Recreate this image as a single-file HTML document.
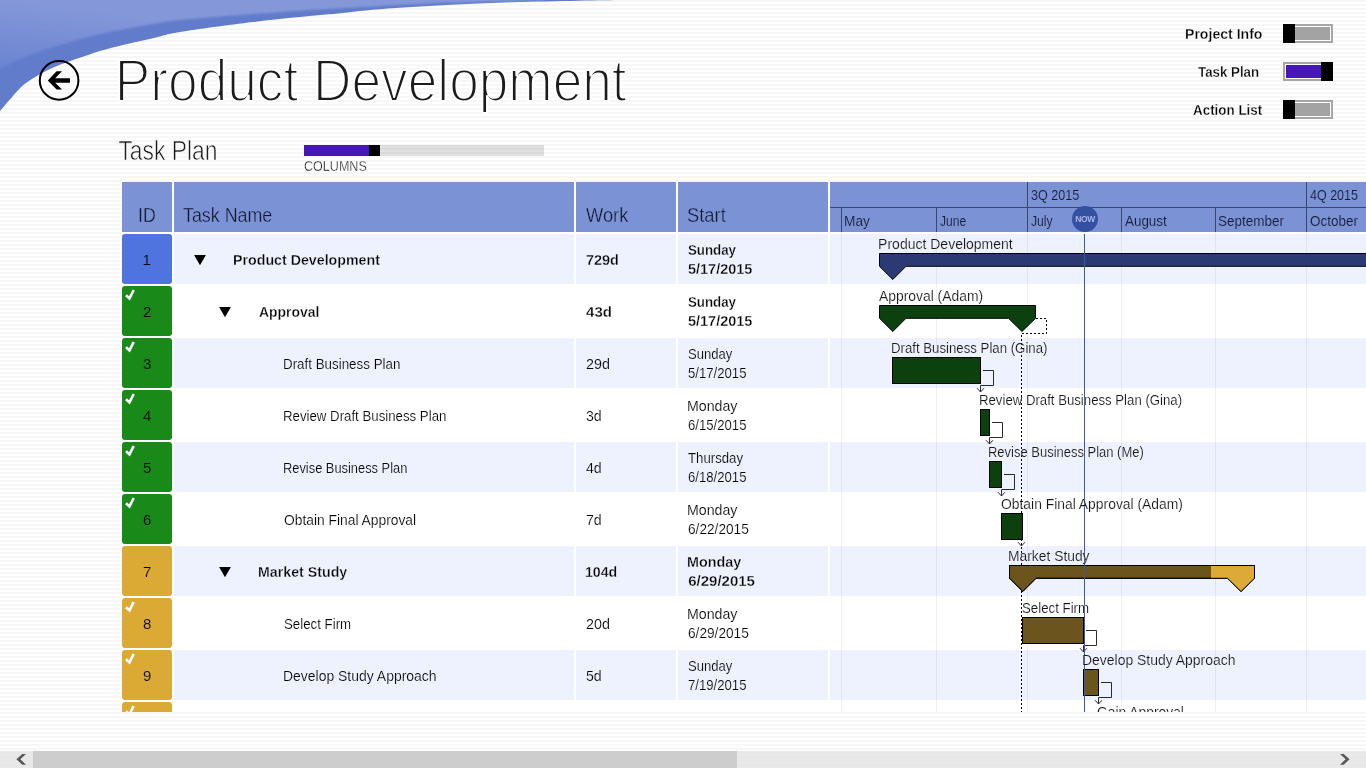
<!DOCTYPE html>
<html lang="en"><head><meta charset="utf-8"><title>Product Development - Task Plan</title>
<style>
html,body{margin:0;padding:0}
body{width:1366px;height:768px;overflow:hidden;position:relative;font-family:"Liberation Sans",sans-serif;
 background:#fff repeating-linear-gradient(to bottom,#f7f7f7 0,#f7f7f7 2px,#fff 2px,#fff 4px);}
.abs{position:absolute}
.t{position:absolute;white-space:nowrap;line-height:1;transform-origin:0 0;display:block}
#grid{position:absolute;left:0;top:0;width:1366px;height:712px;overflow:hidden}
.hd{position:absolute;top:182px;height:50px;background:#7b92d5}
.rb{position:absolute;height:50px;background:#eef2fe}
.idc{position:absolute;left:122px;width:50px;height:50px;border-radius:3px}
.idb{background:#4f74e0}.idg{background:#198a19}.idy{background:#dbaa35}
.vl{position:absolute;width:1px;top:232px;height:480px;background:rgba(110,90,220,0.10)}
.bar{position:absolute;box-sizing:border-box;border:1px solid #000;height:27px}
.tg{position:absolute;left:1283px;width:50px;height:19px;box-sizing:border-box;border:2px solid #a6a6a6;background:#fff}
.tg i{position:absolute;left:1px;top:1px;right:1px;bottom:1px;background:#a3a3a3}
.tg b{position:absolute;top:-2px;width:12px;height:19px;background:#000}
#all{position:absolute;left:0;top:0;width:1366px;height:768px;will-change:transform}
</style></head><body><div id="all">
<svg class="abs" style="left:0;top:0" width="640" height="120" viewBox="0 0 640 120">
<defs><linearGradient id="lg" gradientUnits="userSpaceOnUse" x1="8" y1="0" x2="0" y2="70"><stop offset="0" stop-color="#8498d9"/><stop offset="1" stop-color="#6a84d1"/></linearGradient>
<clipPath id="swc"><path d="M0,111 C1.9,108.7 7.8,101.7 11.7,97.4 C15.6,93.1 19.5,88.5 23.4,85.1 C27.3,81.7 31.3,79.4 35.2,76.9 C39.1,74.5 43.0,72.4 46.9,70.4 C50.8,68.5 54.7,66.8 58.6,65.2 C62.5,63.6 66.4,62.4 70.3,61 C74.2,59.6 77.0,58.7 82,57 C87.0,55.3 92.8,53.1 100,51 C107.2,48.9 115.7,46.8 125,44.5 C134.3,42.2 146.8,39.6 156,37.5 C165.2,35.4 163.8,34.6 180,32 C196.2,29.4 228.7,24.9 253,22 C277.3,19.1 304.8,16.7 326,14.6 C347.2,12.5 360.0,10.8 380,9.2 C400.0,7.6 424.0,6.2 446,5 C468.0,3.8 490.0,2.9 512,2.2 C534.0,1.5 559.7,1.1 578,0.7 C596.3,0.3 614.7,0.1 622,0 L0,0 Z"/></clipPath>
<filter id="swb" x="-5%" y="-20%" width="110%" height="140%"><feGaussianBlur stdDeviation="0.8"/></filter></defs>
<path d="M0,111 C1.9,108.7 7.8,101.7 11.7,97.4 C15.6,93.1 19.5,88.5 23.4,85.1 C27.3,81.7 31.3,79.4 35.2,76.9 C39.1,74.5 43.0,72.4 46.9,70.4 C50.8,68.5 54.7,66.8 58.6,65.2 C62.5,63.6 66.4,62.4 70.3,61 C74.2,59.6 77.0,58.7 82,57 C87.0,55.3 92.8,53.1 100,51 C107.2,48.9 115.7,46.8 125,44.5 C134.3,42.2 146.8,39.6 156,37.5 C165.2,35.4 163.8,34.6 180,32 C196.2,29.4 228.7,24.9 253,22 C277.3,19.1 304.8,16.7 326,14.6 C347.2,12.5 360.0,10.8 380,9.2 C400.0,7.6 424.0,6.2 446,5 C468.0,3.8 490.0,2.9 512,2.2 C534.0,1.5 559.7,1.1 578,0.7 C596.3,0.3 614.7,0.1 622,0 L0,0 Z" fill="#627ccc"/>
<g clip-path="url(#swc)"><path d="M0,69.3 C1.9,68.2 7.8,64.8 11.7,62.8 C15.6,60.8 19.5,59.1 23.4,57.5 C27.3,55.9 31.3,54.4 35.2,52.9 C39.1,51.4 43.0,50.1 46.9,48.8 C50.8,47.5 54.7,46.4 58.6,45.2 C62.5,44.0 66.4,42.8 70.3,41.7 C74.2,40.6 77.0,40.1 82,38.8 C87.0,37.5 92.8,35.7 100,34.1 C107.2,32.5 115.7,30.8 125,29 C134.3,27.2 146.8,24.9 156,23.4 C165.2,21.9 163.8,21.6 180,20 C196.2,18.4 228.7,15.8 253,14 C277.3,12.2 304.8,10.3 326,9 C347.2,7.7 360.0,7.1 380,6 C400.0,4.9 424.0,3.5 446,2.6 C468.0,1.8 495.5,1.3 512,0.9 C528.5,0.5 539.5,0.1 545,0 L545,-30 L-30,-30 L-30,69.3 Z" fill="url(#lg)" filter="url(#swb)"/></g>
</svg>
<svg class="abs" style="left:36px;top:57px" width="46" height="46" viewBox="36 57 46 46">
<circle cx="59.1" cy="80.4" r="19.3" fill="none" stroke="#000" stroke-width="2"/>
<polygon points="47.8,80.4 56.6,71.2 62,71.2 55.2,78.2 70,78.2 70,82.7 55.2,82.7 62,89.6 56.6,89.6" fill="#000"/>
</svg>
<div class="abs" style="left:304px;top:145px;width:240px;height:11px;background:rgba(0,0,0,0.12)"></div>
<div class="abs" style="left:304px;top:145px;width:65px;height:11px;background:#4617b4"></div>
<div class="abs" style="left:369px;top:145px;width:11px;height:11px;background:#000"></div>
<div class="tg" style="top:24px"><i></i><b style="left:-2px"></b></div>
<div class="tg" style="top:62px"><i style="background:#4617b4"></i><b style="left:36px"></b></div>
<div class="tg" style="top:100px"><i></i><b style="left:-2px"></b></div>
<div id="grid">
<div class="abs" style="left:121px;top:182px;width:1245px;height:530px;background:#fff"></div>
<div class="hd" style="left:122px;width:50px"></div>
<div class="hd" style="left:174px;width:400px"></div>
<div class="hd" style="left:576px;width:100px"></div>
<div class="hd" style="left:678px;width:150px"></div>
<div class="hd" style="left:830px;width:536px"></div>
<div class="rb" style="left:174px;top:234px;width:400px"></div>
<div class="rb" style="left:576px;top:234px;width:100px"></div>
<div class="rb" style="left:678px;top:234px;width:150px"></div>
<div class="rb" style="left:830px;top:234px;width:536px"></div>
<div class="idc idb" style="top:234px"></div>
<svg class="abs" style="left:192.6px;top:254px" width="14" height="12" viewBox="0 0 14 12"><polygon points="1.1,1 12.9,1 7,11.2" fill="#000"/></svg>
<div class="idc idg" style="top:286px"></div>
<svg class="abs" style="left:124px;top:288px" width="13" height="14" viewBox="0 0 13 14"><path d="M2.0,7.2 L5.5,10.4 L9.7,2.0" fill="none" stroke="#fff" stroke-width="2.6"/></svg>
<svg class="abs" style="left:217.6px;top:306px" width="14" height="12" viewBox="0 0 14 12"><polygon points="1.1,1 12.9,1 7,11.2" fill="#000"/></svg>
<div class="rb" style="left:174px;top:338px;width:400px"></div>
<div class="rb" style="left:576px;top:338px;width:100px"></div>
<div class="rb" style="left:678px;top:338px;width:150px"></div>
<div class="rb" style="left:830px;top:338px;width:536px"></div>
<div class="idc idg" style="top:338px"></div>
<svg class="abs" style="left:124px;top:340px" width="13" height="14" viewBox="0 0 13 14"><path d="M2.0,7.2 L5.5,10.4 L9.7,2.0" fill="none" stroke="#fff" stroke-width="2.6"/></svg>
<div class="idc idg" style="top:390px"></div>
<svg class="abs" style="left:124px;top:392px" width="13" height="14" viewBox="0 0 13 14"><path d="M2.0,7.2 L5.5,10.4 L9.7,2.0" fill="none" stroke="#fff" stroke-width="2.6"/></svg>
<div class="rb" style="left:174px;top:442px;width:400px"></div>
<div class="rb" style="left:576px;top:442px;width:100px"></div>
<div class="rb" style="left:678px;top:442px;width:150px"></div>
<div class="rb" style="left:830px;top:442px;width:536px"></div>
<div class="idc idg" style="top:442px"></div>
<svg class="abs" style="left:124px;top:444px" width="13" height="14" viewBox="0 0 13 14"><path d="M2.0,7.2 L5.5,10.4 L9.7,2.0" fill="none" stroke="#fff" stroke-width="2.6"/></svg>
<div class="idc idg" style="top:494px"></div>
<svg class="abs" style="left:124px;top:496px" width="13" height="14" viewBox="0 0 13 14"><path d="M2.0,7.2 L5.5,10.4 L9.7,2.0" fill="none" stroke="#fff" stroke-width="2.6"/></svg>
<div class="rb" style="left:174px;top:546px;width:400px"></div>
<div class="rb" style="left:576px;top:546px;width:100px"></div>
<div class="rb" style="left:678px;top:546px;width:150px"></div>
<div class="rb" style="left:830px;top:546px;width:536px"></div>
<div class="idc idy" style="top:546px"></div>
<svg class="abs" style="left:217.6px;top:566px" width="14" height="12" viewBox="0 0 14 12"><polygon points="1.1,1 12.9,1 7,11.2" fill="#000"/></svg>
<div class="idc idy" style="top:598px"></div>
<svg class="abs" style="left:124px;top:600px" width="13" height="14" viewBox="0 0 13 14"><path d="M2.0,7.2 L5.5,10.4 L9.7,2.0" fill="none" stroke="#fff" stroke-width="2.6"/></svg>
<div class="rb" style="left:174px;top:650px;width:400px"></div>
<div class="rb" style="left:576px;top:650px;width:100px"></div>
<div class="rb" style="left:678px;top:650px;width:150px"></div>
<div class="rb" style="left:830px;top:650px;width:536px"></div>
<div class="idc idy" style="top:650px"></div>
<svg class="abs" style="left:124px;top:652px" width="13" height="14" viewBox="0 0 13 14"><path d="M2.0,7.2 L5.5,10.4 L9.7,2.0" fill="none" stroke="#fff" stroke-width="2.6"/></svg>
<div class="idc idy" style="top:702px"></div>
<svg class="abs" style="left:124px;top:704px" width="13" height="14" viewBox="0 0 13 14"><path d="M2.0,7.2 L5.5,10.4 L9.7,2.0" fill="none" stroke="#fff" stroke-width="2.6"/></svg>
<div class="vl" style="left:841px"></div>
<div class="vl" style="left:936px"></div>
<div class="vl" style="left:1027px"></div>
<div class="vl" style="left:1121px"></div>
<div class="vl" style="left:1215px"></div>
<div class="vl" style="left:1306px"></div>
<div class="abs" style="left:830px;top:207px;width:536px;height:1px;background:#3b4670"></div>
<div class="abs" style="left:841px;top:207px;width:1px;height:25px;background:#3b4670"></div>
<div class="abs" style="left:936px;top:207px;width:1px;height:25px;background:#3b4670"></div>
<div class="abs" style="left:1121px;top:207px;width:1px;height:25px;background:#3b4670"></div>
<div class="abs" style="left:1215px;top:207px;width:1px;height:25px;background:#3b4670"></div>
<div class="abs" style="left:1027px;top:182px;width:1px;height:50px;background:#3b4670"></div>
<div class="abs" style="left:1306px;top:182px;width:1px;height:50px;background:#3b4670"></div>
<svg class="abs" style="left:0;top:0" width="1366" height="712" viewBox="0 0 1366 712"><path d="M1036,318.5 H1046.5 V333.5 H1021.5 V712" fill="none" stroke="#000" stroke-width="1" stroke-dasharray="2,2"/>
<polygon points="879.5,253.5 1400.0,253.5 1400.0,266.3 906.0,266.3 892.8,279.5 879.5,266.3" fill="#2b3a72" stroke="#000" stroke-width="1"/>
<polygon points="879.5,305.5 1035.5,305.5 1035.5,318.3 1022.0,331.5 1008.5,318.3 906.0,318.3 892.8,331.5 879.5,318.3" fill="#0c400e" stroke="#000" stroke-width="1"/>
<rect x="892.5" y="357.5" width="88.0" height="26" fill="#0c400e" stroke="#000" stroke-width="1"/>
<path d="M983.0,370.5 H993.5 V385.5 H980.5 V392 M977.0,388.2 L980.5,392 L984.0,388.2" fill="none" stroke="#2b2b2b" stroke-width="1"/>
<rect x="980.5" y="409.5" width="9.0" height="26" fill="#0c400e" stroke="#000" stroke-width="1"/>
<path d="M992.0,422.5 H1002.5 V437.5 H989.5 V444 M986.0,440.2 L989.5,444 L993.0,440.2" fill="none" stroke="#2b2b2b" stroke-width="1"/>
<rect x="989.5" y="461.5" width="12.0" height="26" fill="#0c400e" stroke="#000" stroke-width="1"/>
<path d="M1004.0,474.5 H1014.5 V489.5 H1001.5 V496 M998.0,492.2 L1001.5,496 L1005.0,492.2" fill="none" stroke="#2b2b2b" stroke-width="1"/>
<rect x="1001.5" y="513.5" width="21.0" height="26" fill="#0c400e" stroke="#000" stroke-width="1"/>
<clipPath id="c546"><rect x="1211" y="546" width="400" height="52"/></clipPath>
<polygon points="1009.5,565.5 1254.5,565.5 1254.5,578.3 1241.0,591.5 1227.5,578.3 1036.0,578.3 1022.8,591.5 1009.5,578.3" fill="#6b551c" stroke="#000" stroke-width="1"/>
<polygon points="1009.5,565.5 1254.5,565.5 1254.5,578.3 1241.0,591.5 1227.5,578.3 1036.0,578.3 1022.8,591.5 1009.5,578.3" fill="#dcaa37" clip-path="url(#c546)"/>
<polygon points="1009.5,565.5 1254.5,565.5 1254.5,578.3 1241.0,591.5 1227.5,578.3 1036.0,578.3 1022.8,591.5 1009.5,578.3" fill="none" stroke="#000" stroke-width="1"/>
<rect x="1022.5" y="617.5" width="61.0" height="26" fill="#6b551c" stroke="#000" stroke-width="1"/>
<path d="M1086.0,630.5 H1096.5 V645.5 H1083.5 V652 M1080.0,648.2 L1083.5,652 L1087.0,648.2" fill="none" stroke="#2b2b2b" stroke-width="1"/>
<rect x="1083.5" y="669.5" width="15.0" height="26" fill="#6b551c" stroke="#000" stroke-width="1"/>
<path d="M1101.0,682.5 H1111.5 V697.5 H1098.5 V704 M1095.0,700.2 L1098.5,704 L1102.0,700.2" fill="none" stroke="#2b2b2b" stroke-width="1"/>
<path d="M1018,542.2 L1021.5,546 L1025,542.2" fill="none" stroke="#2b2b2b" stroke-width="1"/>
<rect x="1084" y="234" width="1" height="478" fill="#3f57a8"/></svg>
<div class="abs" style="left:1071.5px;top:206px;width:26px;height:26px;border-radius:13px;background:#3350a3"></div>
<span class="t" style="left:1075.2px;top:214.6px;font-size:8.5px;font-weight:700;color:#a9b7e2;letter-spacing:-0.4px">NOW</span>
<span class="t" style="left:137.9px;top:205px;font-size:20px;color:#10152e;transform:scaleX(0.8881);-webkit-text-stroke:0.38px #7b92d5;paint-order:fill stroke">ID</span>
<span class="t" style="left:183.3px;top:205px;font-size:20px;color:#10152e;transform:scaleX(0.8926);-webkit-text-stroke:0.38px #7b92d5;paint-order:fill stroke">Task Name</span>
<span class="t" style="left:585.5px;top:205px;font-size:20px;color:#10152e;transform:scaleX(0.9129);-webkit-text-stroke:0.38px #7b92d5;paint-order:fill stroke">Work</span>
<span class="t" style="left:686.7px;top:205px;font-size:20px;color:#10152e;transform:scaleX(0.9180);-webkit-text-stroke:0.38px #7b92d5;paint-order:fill stroke">Start</span>
<span class="t" style="left:1030.9px;top:188px;font-size:14px;color:#141a33;transform:scaleX(0.8985);-webkit-text-stroke:0.15px #7b92d5;paint-order:fill stroke">3Q 2015</span>
<span class="t" style="left:1309.9px;top:188px;font-size:14px;color:#141a33;transform:scaleX(0.8929);-webkit-text-stroke:0.15px #7b92d5;paint-order:fill stroke">4Q 2015</span>
<span class="t" style="left:843.9px;top:214px;font-size:14px;color:#141a33;transform:scaleX(0.9804);-webkit-text-stroke:0.15px #7b92d5;paint-order:fill stroke">May</span>
<span class="t" style="left:939.8px;top:214px;font-size:14px;color:#141a33;transform:scaleX(0.8619);-webkit-text-stroke:0.15px #7b92d5;paint-order:fill stroke">June</span>
<span class="t" style="left:1030.6px;top:214px;font-size:14px;color:#141a33;transform:scaleX(0.8696);-webkit-text-stroke:0.15px #7b92d5;paint-order:fill stroke">July</span>
<span class="t" style="left:1124.8px;top:214px;font-size:14px;color:#141a33;transform:scaleX(0.9577);-webkit-text-stroke:0.15px #7b92d5;paint-order:fill stroke">August</span>
<span class="t" style="left:1217.6px;top:214px;font-size:14px;color:#141a33;transform:scaleX(0.9641);-webkit-text-stroke:0.15px #7b92d5;paint-order:fill stroke">September</span>
<span class="t" style="left:1309.7px;top:214px;font-size:14px;color:#141a33;transform:scaleX(0.9643);-webkit-text-stroke:0.15px #7b92d5;paint-order:fill stroke">October</span>
<span class="t" style="left:233.1px;top:252px;font-size:15px;color:#000;font-weight:700;transform:scaleX(0.9479);-webkit-text-stroke:0.3px #eef2fe;paint-order:fill stroke">Product Development</span>
<span class="t" style="left:142.5px;top:252px;font-size:15px;color:#000;-webkit-text-stroke:0.18px #4f74e0;paint-order:fill stroke">1</span>
<span class="t" style="left:586.1px;top:252px;font-size:15px;color:#000;font-weight:700;transform:scaleX(0.9639);-webkit-text-stroke:0.3px #eef2fe;paint-order:fill stroke">729d</span>
<span class="t" style="left:688.2px;top:242px;font-size:15px;color:#000;font-weight:700;transform:scaleX(0.8863);-webkit-text-stroke:0.3px #eef2fe;paint-order:fill stroke">Sunday</span>
<span class="t" style="left:688.2px;top:261px;font-size:15px;color:#000;font-weight:700;transform:scaleX(0.9640);-webkit-text-stroke:0.3px #eef2fe;paint-order:fill stroke">5/17/2015</span>
<span class="t" style="left:259.1px;top:304px;font-size:15px;color:#000;font-weight:700;transform:scaleX(0.9269);-webkit-text-stroke:0.3px #fff;paint-order:fill stroke">Approval</span>
<span class="t" style="left:143.0px;top:304px;font-size:15px;color:#000;-webkit-text-stroke:0.18px #198a19;paint-order:fill stroke">2</span>
<span class="t" style="left:586.1px;top:304px;font-size:15px;color:#000;font-weight:700;transform:scaleX(1.0045);-webkit-text-stroke:0.3px #fff;paint-order:fill stroke">43d</span>
<span class="t" style="left:688.2px;top:294px;font-size:15px;color:#000;font-weight:700;transform:scaleX(0.8863);-webkit-text-stroke:0.3px #fff;paint-order:fill stroke">Sunday</span>
<span class="t" style="left:688.2px;top:313px;font-size:15px;color:#000;font-weight:700;transform:scaleX(0.9640);-webkit-text-stroke:0.3px #fff;paint-order:fill stroke">5/17/2015</span>
<span class="t" style="left:283.3px;top:356px;font-size:15px;color:#000;transform:scaleX(0.8911);-webkit-text-stroke:0.18px #eef2fe;paint-order:fill stroke">Draft Business Plan</span>
<span class="t" style="left:143.0px;top:356px;font-size:15px;color:#000;-webkit-text-stroke:0.18px #198a19;paint-order:fill stroke">3</span>
<span class="t" style="left:586.1px;top:356px;font-size:15px;color:#000;transform:scaleX(0.9553);-webkit-text-stroke:0.18px #eef2fe;paint-order:fill stroke">29d</span>
<span class="t" style="left:688.3px;top:346px;font-size:15px;color:#000;transform:scaleX(0.8716);-webkit-text-stroke:0.18px #eef2fe;paint-order:fill stroke">Sunday</span>
<span class="t" style="left:688.3px;top:365px;font-size:15px;color:#000;transform:scaleX(0.8764);-webkit-text-stroke:0.18px #eef2fe;paint-order:fill stroke">5/17/2015</span>
<span class="t" style="left:283.3px;top:408px;font-size:15px;color:#000;transform:scaleX(0.8827);-webkit-text-stroke:0.18px #fff;paint-order:fill stroke">Review Draft Business Plan</span>
<span class="t" style="left:143.0px;top:408px;font-size:15px;color:#000;-webkit-text-stroke:0.18px #198a19;paint-order:fill stroke">4</span>
<span class="t" style="left:586.1px;top:408px;font-size:15px;color:#000;transform:scaleX(0.9411);-webkit-text-stroke:0.18px #fff;paint-order:fill stroke">3d</span>
<span class="t" style="left:687.4px;top:398px;font-size:15px;color:#000;transform:scaleX(0.9454);-webkit-text-stroke:0.18px #fff;paint-order:fill stroke">Monday</span>
<span class="t" style="left:688.3px;top:417px;font-size:15px;color:#000;transform:scaleX(0.8764);-webkit-text-stroke:0.18px #fff;paint-order:fill stroke">6/15/2015</span>
<span class="t" style="left:283.4px;top:460px;font-size:15px;color:#000;transform:scaleX(0.8570);-webkit-text-stroke:0.18px #eef2fe;paint-order:fill stroke">Revise Business Plan</span>
<span class="t" style="left:143.0px;top:460px;font-size:15px;color:#000;-webkit-text-stroke:0.18px #198a19;paint-order:fill stroke">5</span>
<span class="t" style="left:586.1px;top:460px;font-size:15px;color:#000;transform:scaleX(0.9411);-webkit-text-stroke:0.18px #eef2fe;paint-order:fill stroke">4d</span>
<span class="t" style="left:688.3px;top:450px;font-size:15px;color:#000;transform:scaleX(0.8803);-webkit-text-stroke:0.18px #eef2fe;paint-order:fill stroke">Thursday</span>
<span class="t" style="left:688.3px;top:469px;font-size:15px;color:#000;transform:scaleX(0.8764);-webkit-text-stroke:0.18px #eef2fe;paint-order:fill stroke">6/18/2015</span>
<span class="t" style="left:284.2px;top:512px;font-size:15px;color:#000;transform:scaleX(0.9213);-webkit-text-stroke:0.18px #fff;paint-order:fill stroke">Obtain Final Approval</span>
<span class="t" style="left:143.0px;top:512px;font-size:15px;color:#000;-webkit-text-stroke:0.18px #198a19;paint-order:fill stroke">6</span>
<span class="t" style="left:586.1px;top:512px;font-size:15px;color:#000;transform:scaleX(0.9411);-webkit-text-stroke:0.18px #fff;paint-order:fill stroke">7d</span>
<span class="t" style="left:687.4px;top:502px;font-size:15px;color:#000;transform:scaleX(0.9454);-webkit-text-stroke:0.18px #fff;paint-order:fill stroke">Monday</span>
<span class="t" style="left:688.3px;top:521px;font-size:15px;color:#000;transform:scaleX(0.9110);-webkit-text-stroke:0.18px #fff;paint-order:fill stroke">6/22/2015</span>
<span class="t" style="left:258.1px;top:564px;font-size:15px;color:#000;font-weight:700;transform:scaleX(0.9473);-webkit-text-stroke:0.3px #eef2fe;paint-order:fill stroke">Market Study</span>
<span class="t" style="left:143.0px;top:564px;font-size:15px;color:#000;-webkit-text-stroke:0.18px #dbaa35;paint-order:fill stroke">7</span>
<span class="t" style="left:585.4px;top:564px;font-size:15px;color:#000;font-weight:700;transform:scaleX(0.9434);-webkit-text-stroke:0.3px #eef2fe;paint-order:fill stroke">104d</span>
<span class="t" style="left:687.3px;top:554px;font-size:15px;color:#000;font-weight:700;transform:scaleX(0.9552);-webkit-text-stroke:0.3px #eef2fe;paint-order:fill stroke">Monday</span>
<span class="t" style="left:688.2px;top:573px;font-size:15px;color:#000;font-weight:700;-webkit-text-stroke:0.3px #eef2fe;paint-order:fill stroke">6/29/2015</span>
<span class="t" style="left:284.2px;top:616px;font-size:15px;color:#000;transform:scaleX(0.8850);-webkit-text-stroke:0.18px #fff;paint-order:fill stroke">Select Firm</span>
<span class="t" style="left:143.0px;top:616px;font-size:15px;color:#000;-webkit-text-stroke:0.18px #dbaa35;paint-order:fill stroke">8</span>
<span class="t" style="left:586.1px;top:616px;font-size:15px;color:#000;transform:scaleX(0.9553);-webkit-text-stroke:0.18px #fff;paint-order:fill stroke">20d</span>
<span class="t" style="left:687.4px;top:606px;font-size:15px;color:#000;transform:scaleX(0.9454);-webkit-text-stroke:0.18px #fff;paint-order:fill stroke">Monday</span>
<span class="t" style="left:688.3px;top:625px;font-size:15px;color:#000;transform:scaleX(0.9110);-webkit-text-stroke:0.18px #fff;paint-order:fill stroke">6/29/2015</span>
<span class="t" style="left:283.3px;top:668px;font-size:15px;color:#000;transform:scaleX(0.9300);-webkit-text-stroke:0.18px #eef2fe;paint-order:fill stroke">Develop Study Approach</span>
<span class="t" style="left:143.0px;top:668px;font-size:15px;color:#000;-webkit-text-stroke:0.18px #dbaa35;paint-order:fill stroke">9</span>
<span class="t" style="left:586.1px;top:668px;font-size:15px;color:#000;transform:scaleX(0.9411);-webkit-text-stroke:0.18px #eef2fe;paint-order:fill stroke">5d</span>
<span class="t" style="left:688.3px;top:658px;font-size:15px;color:#000;transform:scaleX(0.8716);-webkit-text-stroke:0.18px #eef2fe;paint-order:fill stroke">Sunday</span>
<span class="t" style="left:688.3px;top:677px;font-size:15px;color:#000;transform:scaleX(0.8764);-webkit-text-stroke:0.18px #eef2fe;paint-order:fill stroke">7/19/2015</span>
<span class="t" style="left:878.1px;top:237px;font-size:14px;color:#161616;-webkit-text-stroke:0.15px #eef2fe;paint-order:fill stroke">Product Development</span>
<span class="t" style="left:879.1px;top:289px;font-size:14px;color:#161616;transform:scaleX(0.9911);-webkit-text-stroke:0.15px #fff;paint-order:fill stroke">Approval (Adam)</span>
<span class="t" style="left:891.3px;top:341px;font-size:14px;color:#161616;transform:scaleX(0.9438);-webkit-text-stroke:0.15px #eef2fe;paint-order:fill stroke">Draft Business Plan (Gina)</span>
<span class="t" style="left:979.2px;top:393px;font-size:14px;color:#161616;transform:scaleX(0.9420);-webkit-text-stroke:0.15px #fff;paint-order:fill stroke">Review Draft Business Plan (Gina)</span>
<span class="t" style="left:988.2px;top:445px;font-size:14px;color:#161616;transform:scaleX(0.9270);-webkit-text-stroke:0.15px #eef2fe;paint-order:fill stroke">Revise Business Plan (Me)</span>
<span class="t" style="left:1000.5px;top:497px;font-size:14px;color:#161616;transform:scaleX(0.9907);-webkit-text-stroke:0.15px #fff;paint-order:fill stroke">Obtain Final Approval (Adam)</span>
<span class="t" style="left:1007.9px;top:549px;font-size:14px;color:#161616;transform:scaleX(0.9886);-webkit-text-stroke:0.15px #eef2fe;paint-order:fill stroke">Market Study</span>
<span class="t" style="left:1021.6px;top:601px;font-size:14px;color:#161616;transform:scaleX(0.9476);-webkit-text-stroke:0.15px #fff;paint-order:fill stroke">Select Firm</span>
<span class="t" style="left:1082.0px;top:653px;font-size:14px;color:#161616;transform:scaleX(0.9958);-webkit-text-stroke:0.15px #eef2fe;paint-order:fill stroke">Develop Study Approach</span>
<span class="t" style="left:1097.1px;top:705px;font-size:14px;color:#161616;transform:scaleX(0.9881);-webkit-text-stroke:0.15px #fff;paint-order:fill stroke">Gain Approval</span>
</div>
<svg class="abs" style="left:0;top:0;overflow:visible" width="700" height="180"><text transform="translate(114.85,101) scale(0.8873,1)" font-family="Liberation Sans, sans-serif" font-size="60" fill="#1c1c1c" stroke="#fff" stroke-width="2.2" stroke-linejoin="round">Product Development</text></svg>
<svg class="abs" style="left:0;top:0;overflow:visible" width="700" height="180"><text transform="translate(118.40,160) scale(0.8471,1)" font-family="Liberation Sans, sans-serif" font-size="27" fill="#1c1c1c" stroke="#fff" stroke-width="0.6" stroke-linejoin="round">Task Plan</text></svg>
<span class="t" style="left:304.3px;top:159px;font-size:14.5px;color:#000;transform:scaleX(0.8659);-webkit-text-stroke:0.4px #fff;paint-order:fill stroke">COLUMNS</span>
<span class="t" style="left:1184.9px;top:26px;font-size:15.5px;color:#000;font-weight:700;transform:scaleX(0.9082);-webkit-text-stroke:0.3px #fff;paint-order:fill stroke">Project Info</span>
<span class="t" style="left:1198.2px;top:64px;font-size:15.5px;color:#000;font-weight:700;transform:scaleX(0.8579);-webkit-text-stroke:0.3px #fff;paint-order:fill stroke">Task Plan</span>
<span class="t" style="left:1193.4px;top:102px;font-size:15.5px;color:#000;font-weight:700;transform:scaleX(0.8646);-webkit-text-stroke:0.3px #fff;paint-order:fill stroke">Action List</span>
<div class="abs" style="left:0;top:751px;width:1366px;height:17px;background:rgba(225,225,225,0.75)"></div>
<div class="abs" style="left:33px;top:751px;width:704px;height:17px;background:#cdcdcd"></div>
<svg class="abs" style="left:14px;top:752px" width="16" height="15" viewBox="14 752 16 15"><polygon points="26,754 22.3,754 16.4,759.3 22.3,764.7 26,764.7 20.4,759.3" fill="#585858"/></svg>
<svg class="abs" style="left:1337px;top:752px" width="16" height="15" viewBox="1337 752 16 15"><polygon points="1340,754 1343.7,754 1349.6,759.3 1343.7,764.7 1340,764.7 1345.6,759.3" fill="#585858"/></svg>
</div></body></html>
